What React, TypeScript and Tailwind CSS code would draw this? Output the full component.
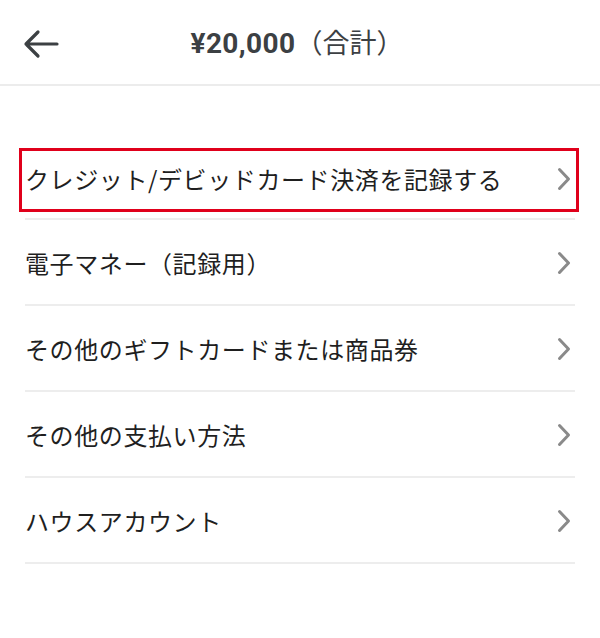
const items = [
  "クレジット/デビッドカード決済を記録する",
  "電子マネー（記録用）",
  "その他のギフトカードまたは商品券",
  "その他の支払い方法",
  "ハウスアカウント",
];

function Chevron() {
  return (
    <svg width="16" height="24" viewBox="0 0 16 24" fill="none" className="shrink-0">
      <path d="M3.5 2.5l9 9.5-9 9.5" stroke="#8a8a8a" strokeWidth="3" strokeLinecap="round" strokeLinejoin="round" />
    </svg>
  );
}

export default function App() {
  return (
    <div
      className="relative w-[600px] h-[638px] bg-white text-[#1f1f1f]"
      style={{ fontFamily: '"Noto Sans CJK JP", "Noto Sans", sans-serif' }}
    >
      <header className="relative flex items-center justify-center h-[86px] border-b-2 border-[#ececec]">
        <button className="absolute left-[22px] top-[28px] p-0">
          <svg width="38" height="32" viewBox="0 0 38 32" fill="none">
            <path d="M35 16H4M16 4L4 16l12 12" stroke="#3c4043" strokeWidth="3.2" strokeLinecap="round" strokeLinejoin="round" />
          </svg>
        </button>
        <h1 className="flex items-baseline text-[26px] text-[#3c4043] mt-[2px] ml-[-6px]">
          <span className="font-bold text-[28px] tracking-[0.4px]" style={{ fontFamily: "Roboto, sans-serif" }}>¥20,000</span>
          <span className="font-normal text-[27px]">（合計）</span>
        </h1>
      </header>

      <ul className="pt-[48px] px-[25px]">
        {items.map((label, i) => (
          <li key={label} className="relative flex items-center justify-between h-[86px] border-b-2 border-[#ededed]">
            <span className={`text-[24px] leading-none tracking-[0.6px] ${i === 0 ? "pt-[6px]" : "pt-[2px]"}`}>{label}</span>
            <span className={`mr-[3px] ${i === 0 ? "pt-[6px]" : "pt-[2px]"}`}>
              <Chevron />
            </span>
            {i === 0 && (
              <div className="absolute left-[-6px] right-[-4px] top-[14px] bottom-[6px] border-[3px] border-[#e0001b]" />
            )}
          </li>
        ))}
      </ul>
    </div>
  );
}
